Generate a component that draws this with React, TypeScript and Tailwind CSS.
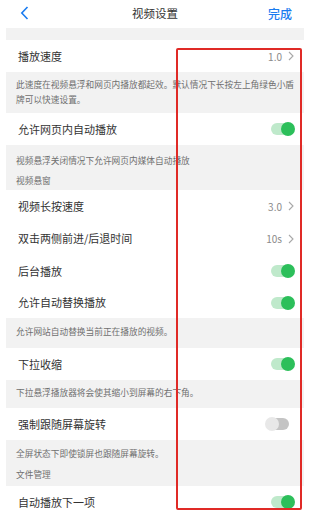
import React from 'react';

const font = { fontFamily: '"Noto Sans CJK SC", "Noto Sans", sans-serif' };

function Toggle({ on }: { on: boolean }) {
  if (on) {
    return (
      <div className="relative w-[22px] h-[12px] mr-[1px]">
        <div className="absolute inset-0 rounded-full bg-[#bfe9cb]" />
        <div className="absolute right-[-2px] top-[-1px] w-[14px] h-[14px] rounded-full bg-[#2cbf5a]" />
      </div>
    );
  }
  return (
    <div className="relative w-[22px] h-[12px] mr-[5px]">
      <div className="absolute inset-0 rounded-full bg-[#c4c4c4]" />
      <div className="absolute left-[-2px] top-[-1px] w-[14px] h-[14px] rounded-full bg-[#e8e8e8]" />
    </div>
  );
}

function Chevron() {
  return (
    <svg width="6" height="10" viewBox="0 0 6 10" className="ml-[6px]">
      <path d="M1 1l4 4-4 4" fill="none" stroke="#a8a8a8" strokeWidth="1.1" />
    </svg>
  );
}

function Row({ label, value, toggle, h = 'h-[32px]' }: { label: string; value?: string; toggle?: boolean; h?: string }) {
  return (
    <div className={`flex items-center justify-between bg-white pl-[12px] pr-[10px] ${h}`}>
      <span className="text-[11px] text-[#333]">{label}</span>
      {value !== undefined && (
        <span className="flex items-center text-[10px] text-[#8a8a8a]">
          {value}
          <Chevron />
        </span>
      )}
      {toggle !== undefined && <Toggle on={toggle} />}
    </div>
  );
}

function Desc({ children, className = '' }: { children: React.ReactNode; className?: string }) {
  return (
    <div className={`bg-[#f2f2f2] pl-[10px] pr-[8px] text-[8.7px] leading-[15px] text-[#6f6f6f] ${className}`}>{children}</div>
  );
}

export default function App() {
  return (
    <div className="relative w-[320px] h-[518px] overflow-hidden bg-white" style={font}>
      <div className="ml-[6px] w-[298px]">
        <div className="relative flex items-center justify-center h-[28px]">
          <svg width="9" height="14" viewBox="0 0 9 14" className="absolute left-[14px] top-[6px]">
            <path d="M7.5 1L1.8 7l5.7 6" fill="none" stroke="#1a7cf0" strokeWidth="1.6" />
          </svg>
          <span className="text-[11.5px] text-[#333]">视频设置</span>
          <span className="absolute right-[12px] top-[5px] text-[12px] font-medium text-[#1a7cf0]">完成</span>
        </div>
        <div className="h-[12px] bg-[#f2f2f2]" />
        <Row label="播放速度" value="1.0" />
        <Desc className="h-[41px] pt-[5px]">
          此速度在视频悬浮和网页内播放都起效。默认情况下长按左上角绿色小盾牌可以快速设置。
        </Desc>
        <Row label="允许网页内自动播放" toggle={true} />
        <Desc className="h-[45px] pt-[8px]">
          <div>视频悬浮关闭情况下允许网页内媒体自动播放</div>
          <div className="mt-[5px]">视频悬窗</div>
        </Desc>
        <Row label="视频长按速度" value="3.0" />
        <Row label="双击两侧前进/后退时间" value="10s" h="h-[33px]" />
        <Row label="后台播放" toggle={true} />
        <Row label="允许自动替换播放" toggle={true} h="h-[31px]" />
        <Desc className="h-[30px] pt-[6px]">允许网站自动替换当前正在播放的视频。</Desc>
        <Row label="下拉收缩" toggle={true} />
        <Desc className="h-[28px] pt-[5px]">下拉悬浮播放器将会使其缩小到屏幕的右下角。</Desc>
        <Row label="强制跟随屏幕旋转" toggle={false} />
        <Desc className="h-[46px] pt-[6px]">
          <div>全屏状态下即使锁屏也跟随屏幕旋转。</div>
          <div className="mt-[6px]">文件管理</div>
        </Desc>
        <Row label="自动播放下一项" toggle={true} />
      </div>
      <div className="absolute left-[176px] top-[48px] w-[126px] h-[462px] border-2 border-[#e02a26] rounded-[2px]" />
    </div>
  );
}
